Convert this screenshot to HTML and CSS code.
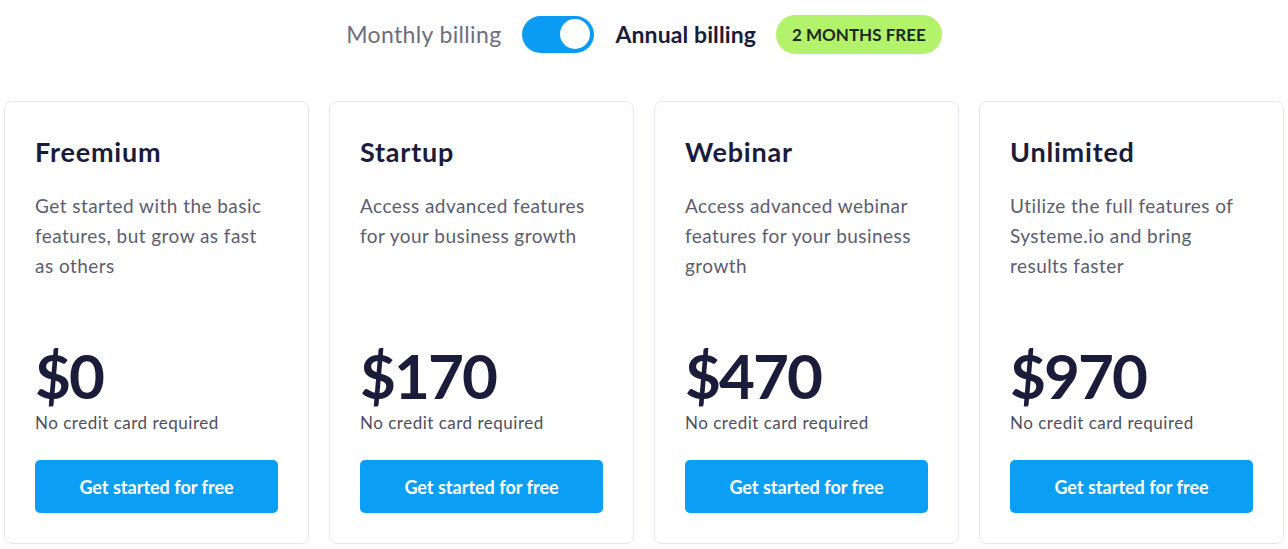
FILE: index.html
```html
<!DOCTYPE html>
<html>
<head>
<meta charset="utf-8">
<link rel="stylesheet" href="styles.css">
</head>
<body>
<div class="billing">
  <span class="billing-label muted">Monthly billing</span>
  <span class="toggle"><span class="knob"></span></span>
  <span class="billing-label active">Annual billing</span>
  <span class="badge">2 MONTHS FREE</span>
</div>
<div class="plans">
  <div class="card">
    <h2 class="title">Freemium</h2>
    <p class="desc">Get started with the basic features, but grow as fast as others</p>
    <div class="bottom">
      <div class="price">$0</div>
      <div class="note">No credit card required</div>
      <a class="btn">Get started for free</a>
    </div>
  </div>
  <div class="card">
    <h2 class="title">Startup</h2>
    <p class="desc">Access advanced features for your business growth</p>
    <div class="bottom">
      <div class="price">$170</div>
      <div class="note">No credit card required</div>
      <a class="btn">Get started for free</a>
    </div>
  </div>
  <div class="card">
    <h2 class="title">Webinar</h2>
    <p class="desc">Access advanced webinar features for your business growth</p>
    <div class="bottom">
      <div class="price">$470</div>
      <div class="note">No credit card required</div>
      <a class="btn">Get started for free</a>
    </div>
  </div>
  <div class="card">
    <h2 class="title">Unlimited</h2>
    <p class="desc">Utilize the full features of Systeme.io and bring results faster</p>
    <div class="bottom">
      <div class="price">$970</div>
      <div class="note">No credit card required</div>
      <a class="btn">Get started for free</a>
    </div>
  </div>
</div>
</body>
</html>
```

FILE: styles.css
```css
* { box-sizing: border-box; }
html, body { margin: 0; padding: 0; background: #ffffff; }
body {
  font-family: "Lato", "Noto Sans", sans-serif;
  color: #1b1c3a;
  width: 1288px;
  height: 549px;
  overflow: hidden;
}
.billing {
  display: flex;
  align-items: center;
  justify-content: center;
  height: 68px;
  padding-left: 0;
}
.billing-label { font-size: 23px; }
.muted { color: #6d6e7e; margin-right: 21px; letter-spacing: 0.35px; }
.active { color: #1b1c3a; font-weight: 700; margin-left: 21px; margin-right: 20px; letter-spacing: 0.1px; }
.toggle {
  width: 72px;
  height: 37px;
  border-radius: 19px;
  background: #0a9cf5;
  display: flex;
  align-items: center;
  justify-content: flex-end;
  padding-right: 4px;
}
.knob {
  width: 30px;
  height: 30px;
  border-radius: 50%;
  background: #ffffff;
}
.badge {
  background: #b3f36c;
  color: #1b2a1a;
  font-size: 17px;
  font-weight: 700;
  height: 39px;
  padding: 0 16px;
  border-radius: 20px;
  display: flex;
  align-items: center;
}
.plans {
  display: grid;
  grid-template-columns: repeat(4, 305px);
  gap: 20px;
  padding: 33px 4px 0 4px;
}
.card {
  height: 443px;
  border: 1px solid #e6e7ee;
  border-radius: 8px;
  padding: 30px 30px 30px 30px;
  display: flex;
  flex-direction: column;
}
.title {
  margin: 0;
  font-size: 27px;
  font-weight: 700;
  line-height: 40px;
  color: #1b1c3a;
  letter-spacing: 0.8px;
}
.desc {
  margin: 19px 0 0 0;
  font-size: 19px;
  line-height: 30px;
  color: #5c5d6e;
  letter-spacing: 0.45px;
}
.bottom { margin-top: auto; display: flex; flex-direction: column; }
.price {
  font-size: 62px;
  font-weight: 700;
  line-height: 62px;
  color: #1b1c3a;
  letter-spacing: -2px;
}
.note {
  font-size: 17px;
  line-height: 24px;
  color: #4e4f60;
  margin-top: 5px;
  letter-spacing: 0.5px;
}
.btn {
  margin-top: 25px;
  width: 243px;
  height: 53px;
  border-radius: 5px;
  background: #0a9ff5;
  color: #ffffff;
  font-size: 18px;
  font-weight: 700;
  display: flex;
  align-items: center;
  justify-content: center;
}
```
